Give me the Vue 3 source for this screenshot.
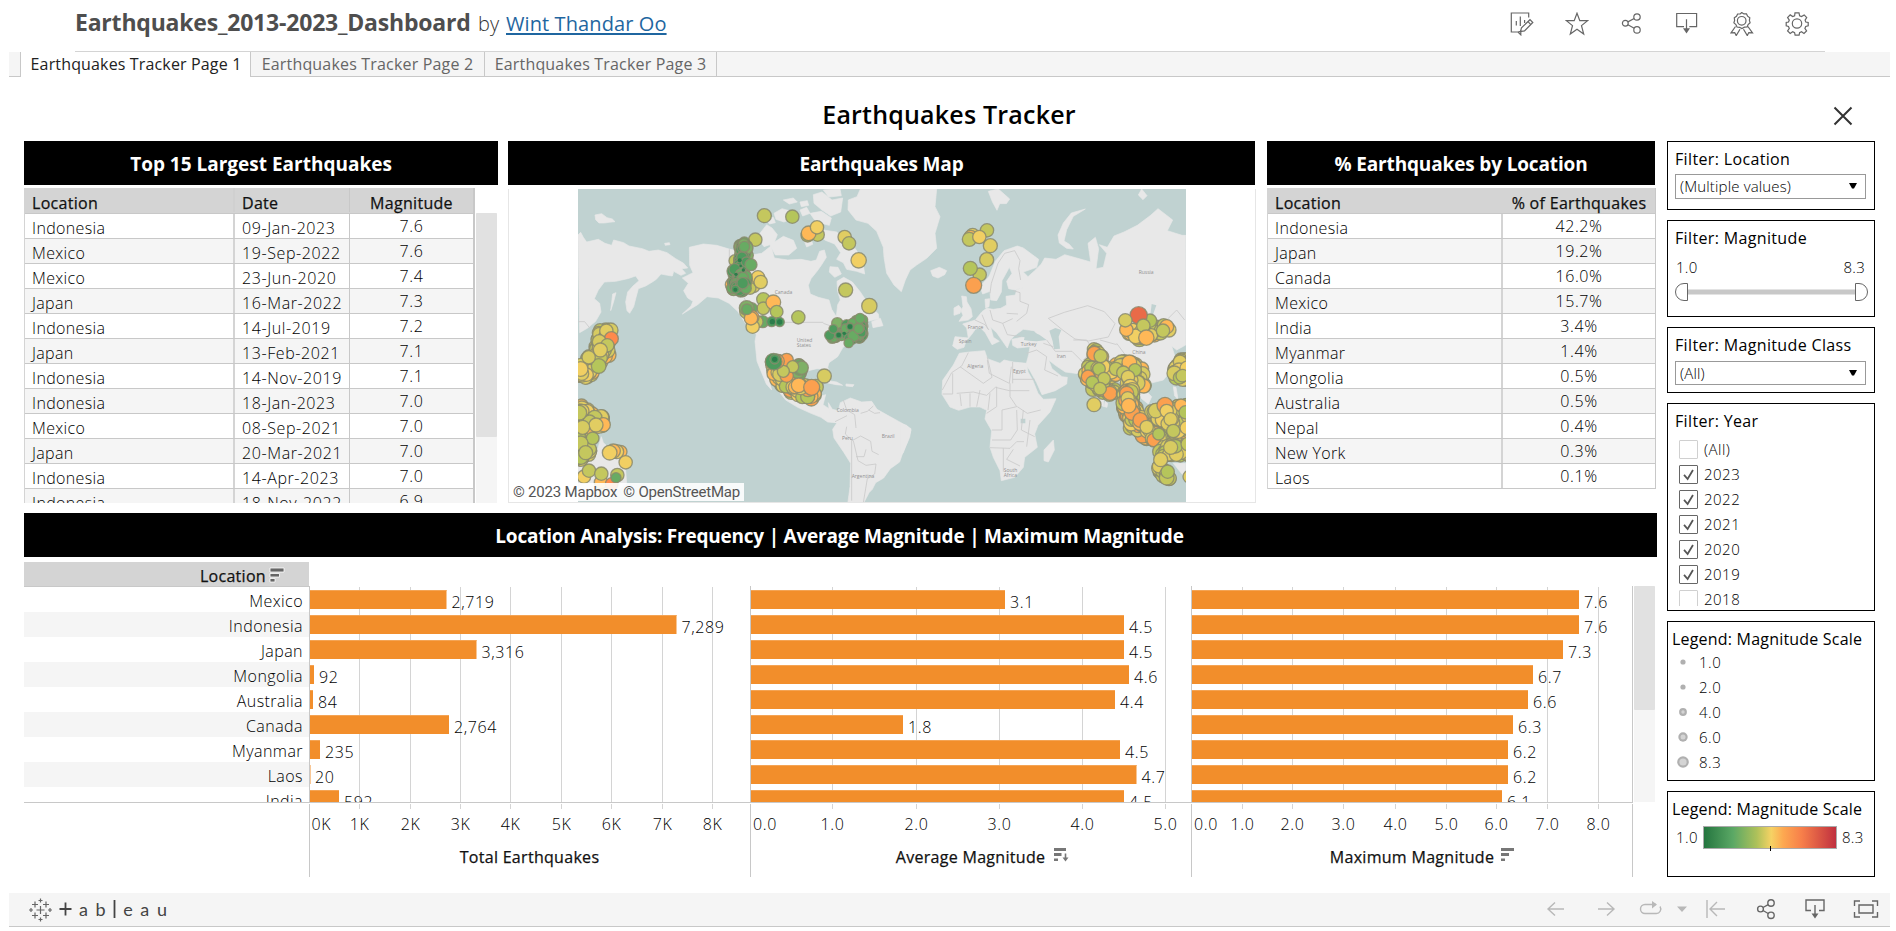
<script setup>
const quakes = [
  ['Indonesia', '09-Jan-2023', '7.6'], ['Mexico', '19-Sep-2022', '7.6'], ['Mexico', '23-Jun-2020', '7.4'],
  ['Japan', '16-Mar-2022', '7.3'], ['Indonesia', '14-Jul-2019', '7.2'], ['Japan', '13-Feb-2021', '7.1'],
  ['Indonesia', '14-Nov-2019', '7.1'], ['Indonesia', '18-Jan-2023', '7.0'], ['Mexico', '08-Sep-2021', '7.0'],
  ['Japan', '20-Mar-2021', '7.0'], ['Indonesia', '14-Apr-2023', '7.0'], ['Indonesia', '18-Nov-2022', '6.9'],
]
const shares = [
  ['Indonesia', '42.2%'], ['Japan', '19.2%'], ['Canada', '16.0%'], ['Mexico', '15.7%'], ['India', '3.4%'],
  ['Myanmar', '1.4%'], ['Mongolia', '0.5%'], ['Australia', '0.5%'], ['Nepal', '0.4%'], ['New York', '0.3%'], ['Laos', '0.1%'],
]
const places = ['Mexico', 'Indonesia', 'Japan', 'Mongolia', 'Australia', 'Canada', 'Myanmar', 'Laos', 'India']
const charts = [
  {
    title: 'Total Earthquakes', titleX: 220.5, zero: '0K', zeroX: 2.5, icon: '',
    ticks: [[50, '1K'], [101, '2K'], [151, '3K'], [201, '4K'], [252, '5K'], [302, '6K'], [353, '7K'], [403, '8K']],
    bars: [[137.5, '2,719'], [367.5, '7,289'], [167.5, '3,316'], [5, '92'], [4, '84'], [140, '2,764'], [11, '235'], [1, '20'], [30, '592']],
  },
  {
    title: 'Average Magnitude', titleX: 220.5, zero: '0.0', zeroX: 3, icon: 'down',
    ticks: [[82, '1.0'], [166, '2.0'], [249, '3.0'], [332, '4.0'], [415, '5.0']],
    bars: [[255, '3.1'], [374, '4.5'], [374, '4.5'], [379, '4.6'], [365, '4.4'], [153, '1.8'], [370, '4.5'], [386.5, '4.7'], [374, '4.5']],
  },
  {
    title: 'Maximum Magnitude', titleX: 221, zero: '0.0', zeroX: 3, icon: 'plain',
    ticks: [[51, '1.0'], [101, '2.0'], [152, '3.0'], [204, '4.0'], [255, '5.0'], [305, '6.0'], [356, '7.0'], [407, '8.0']],
    bars: [[388, '7.6'], [388, '7.6'], [372, '7.3'], [342, '6.7'], [337, '6.6'], [322, '6.3'], [317, '6.2'], [317, '6.2'], [311, '6.1']],
  },
]
const years = [['(All)', false], ['2023', true], ['2022', true], ['2021', true], ['2020', true], ['2019', true], ['2018', false]]
const sizes = [['1.0', 2.6], ['2.0', 2.6], ['4.0', 3.9], ['6.0', 4.7], ['8.3', 5.8]]

const C = { y: '#f1cf63', s: '#e1cd62', l: '#d7cb61', k: '#c4c75e', g: '#b5c55b', o: '#ffb857', O: '#fba04f', r: '#ff8a4c', R: '#e96a48', e: '#68ab63', E: '#4d9a5d', m: '#7fb066' }

// Small deterministic generator so the dense swarms render the same way each time.
let seed = 7
const rnd = () => { seed = (seed * 16807) % 2147483647; return seed / 2147483647 }
function swarm(points, n, spread, palette, r = 20) {
  const out = []
  for (let i = 0; i < n; i++) {
    const t = rnd() * (points.length - 1)
    const a = Math.floor(t)
    const f = t - a
    const [x1, y1] = points[a]
    const [x2, y2] = points[a + 1]
    out.push([
      Math.round(x1 + (x2 - x1) * f + (rnd() - 0.5) * spread),
      Math.round(y1 + (y2 - y1) * f + (rnd() - 0.5) * spread),
      Math.round(r + (rnd() - 0.5) * 4),
      palette[Math.floor(rnd() * palette.length)],
    ])
  }
  return out
}
const westDots = [
  ...swarm([[104, 460], [98, 510], [75, 540], [24, 585]], 120, 36, 'kslgyo', 21),
  ...swarm([[24, 685], [60, 705], [94, 726], [30, 745]], 50, 24, 'slyok', 21),
  ...swarm([[30, 765], [45, 800], [50, 820], [20, 830]], 24, 26, 'gkls'),
  [109, 452, 20, 's'], [124, 476, 21, 'r'], [88, 485, 21, 'l'], [112, 496, 20, 'k'], [91, 510, 21, 's'], [56, 532, 20, 'l'], [32, 567, 22, 'y'], [28, 698, 22, 'k'], [78, 735, 21, 's'], [38, 742, 21, 'l'], [68, 775, 19, 'g'], [32, 790, 22, 'k'], [47, 818, 21, 'k'],
  [152, 815, 19, 'o'], [140, 815, 21, 'y'], [130, 813, 21, 'o'], [119, 818, 22, 'y'], [167, 847, 20, 'y'], [42, 890, 20, 'y'], [57, 872, 20, 'k'], [93, 907, 20, 'o'], [94, 881, 20, 'k'], [142, 885, 20, 'k'], [125, 912, 19, 'r'], [138, 893, 15, 'e'],
  [583, 107, 21, 'k'], [667, 110, 20, 'g'], [713, 166, 20, 'k'], [743, 164, 20, 'k'], [716, 160, 22, 'o'], [741, 142, 20, 'y'], [824, 171, 20, 's'], [837, 190, 20, 'k'], [866, 241, 23, 'y'], [827, 330, 21, 'k'], [898, 378, 23, 'l'], [685, 412, 20, 'g'],
  [556, 179, 20, 'k'], [486, 314, 20, 'o'], [495, 242, 18, 'k'], [550, 318, 20, 's'], [564, 292, 20, 'y'], [540, 325, 18, 'k'], [572, 306, 20, 's'],
  ...swarm([[518, 195], [522, 230], [512, 260], [505, 290], [498, 325]], 80, 28, 'eEEEm', 17),
  ...swarm([[500, 275], [525, 305], [500, 330]], 34, 28, 'EEe', 17),
  [523, 200, 16, 'e'], [543, 254, 18, 'e'], [518, 310, 17, 'E'], [496, 328, 12, 'E'],
  [580, 358, 20, 'g'], [580, 385, 19, 'k'], [578, 425, 18, 'e'], [560, 425, 19, 'k'], [545, 385, 17, 'e'], [530, 395, 21, 'k'], [530, 384, 22, 'm'], [546, 412, 21, 'O'], [548, 440, 20, 'y'], [543, 415, 20, 'o'], [531, 388, 16, 'e'], [610, 367, 22, 'o'], [620, 395, 19, 'g'], [605, 425, 15, 'E'], [629, 426, 14, 'E'],
  [802, 430, 17, 'm'], ...swarm([[785, 470], [820, 455], [845, 440], [872, 425], [870, 465], [830, 470]], 80, 22, 'EEe', 15), [870, 415, 15, 'e'], [866, 446, 15, 'e'], [790, 447, 13, 'E'], [836, 489, 14, 'e'], [806, 466, 11, 'E'], [840, 440, 11, 'E'],
  ...swarm([[618, 550], [640, 590], [670, 625], [730, 640]], 110, 36, 'kOsoygl', 21), ...swarm([[690, 560], [690, 580]], 12, 18, 'em', 18),
  [650, 540, 20, 'O'], [650, 587, 20, 'O'], [668, 560, 18, 'k'], [640, 574, 18, 'k'], [686, 616, 22, 'o'], [725, 622, 24, 'O'], [763, 588, 21, 'l'], [622, 544, 21, 'O'], [611, 545, 25, 'E'], [614, 538, 14, 'E'],
]
const eastDots = [
  [218, 166, 21, 's'], [212, 172, 21, 'o'], [261, 151, 20, 'k'], [208, 178, 21, 'k'], [238, 171, 20, 'y'], [271, 197, 21, 's'], [260, 239, 21, 'l'], [239, 284, 20, 'k'], [211, 265, 21, 'g'], [221, 316, 24, 'O'],
  ...swarm([[680, 450], [720, 468], [765, 455], [800, 440]], 36, 20, 'soyk', 21), [750, 422, 20, 'g'], [716, 406, 26, 'R'], [676, 421, 20, 'l'], [730, 437, 20, 'k'], [800, 440, 21, 'o'], [789, 452, 20, 'k'], [739, 473, 23, 'o'],
  ...swarm([[600, 515], [580, 560], [565, 595], [600, 620], [630, 635]], 64, 36, 'kgosl', 20),
  ...swarm([[600, 580], [660, 570], [690, 560], [725, 600], [690, 600]], 84, 40, 'skoygl', 21),
  [583, 521, 22, 'O'], [602, 528, 20, 'k'], [597, 567, 19, 'g'], [564, 590, 20, 'O'], [612, 596, 19, 'k'], [577, 607, 19, 'g'], [630, 640, 21, 'O'], [600, 626, 19, 'k'], [582, 674, 21, 's'], [688, 547, 22, 'o'], [648, 567, 20, 'k'], [705, 570, 19, 'g'], [670, 578, 20, 'k'], [684, 591, 20, 's'],
  [690, 745, 20, 'k'], ...swarm([[684, 630], [682, 680], [710, 725], [750, 765], [800, 765], [857, 760]], 220, 30, 'kosOylg', 21),
  ...swarm([[765, 705], [800, 700], [857, 690], [857, 740], [790, 740]], 130, 38, 'kgosyl', 20),
  ...swarm([[785, 815], [820, 808], [857, 815]], 44, 30, 'kgsl', 20), ...swarm([[778, 862], [803, 892]], 16, 16, 'kls', 21),
  [680, 640, 21, 'O'], [683, 655, 20, 's'], [686, 677, 22, 'o'], [721, 720, 22, 'O'], [740, 741, 20, 's'], [795, 676, 24, 'O'], [800, 693, 20, 'y'], [812, 718, 20, 's'], [820, 753, 20, 'k'], [776, 762, 18, 'g'], [812, 802, 21, 'l'], [782, 839, 21, 's'], [800, 893, 22, 'k'], [803, 875, 20, 'g'],
  ...swarm([[857, 535], [835, 570], [830, 585], [857, 590]], 40, 18, 'skgyl', 21), [862, 565, 22, 'y'], [847, 587, 19, 'k'], [857, 697, 20, 'g'], [860, 743, 20, 'y'], [863, 792, 20, 'k'], [868, 890, 19, 's'],
]
</script>

<template>
  <div class="page">
    <header class="top">
      <h1>Earthquakes_2013-2023_Dashboard</h1>
      <span class="by">by</span>
      <a class="author">Wint Thandar Oo</a>
      <div class="actions">
        <svg viewBox="0 0 24 24"><path d="M8 20H1.3V1H18.7V5.5M6.3 9v4.5M10.3 4.5v9.5M14.6 8v3M8 20l2.8 2.8v-3.6z" /><path d="M10.5 19.5l1-3.8 8.5-8 2.8 2.8-8.3 8.4zM18 9.7l2.6 2.7" /></svg>
        <svg viewBox="0 0 24 24"><path d="M12 1.2L14.8 8.700H22.600L16.500 13.600 18.700 22 12 17.200 5.300 22 7.500 13.600 1.400 8.700H9.200z" /></svg>
        <svg viewBox="0 0 24 24"><circle cx="5.300" cy="11.300" r="2.900" /><circle cx="17" cy="5" r="3.200" /><circle cx="17" cy="17.900" r="3.200" /><path d="M7.900 9.900L14.200 6.500M7.900 12.800L14.200 16.300" /></svg>
        <svg viewBox="0 0 24 24"><path d="M9 14.700H1.700V1.500H21.600V14.700H14.300M11.500 7.300V17" /><path class="solid" d="M8 16.200h7L11.500 21.400z" /></svg>
        <svg viewBox="0 0 24 24"><circle cx="11.700" cy="8.800" r="4.300" /><path d="M11.700 .5l2.200 1.400 2.600 0 1.100 2.300 2.200 1.500-.4 2.600 .7 2.500-2 1.700-1 2.400-2.600 .3-2.600 1.300-2.300-1.200-2.600-.3-1.100-2.400-2-1.700.7-2.500-.3-2.600 2.200-1.500 1.100-2.300 2.600 0zM5.500 14.500L1 20.800l3.700-.2 1.500 3L10 17.200M17.900 14.500l4.600 6.300-3.700-.2-1.500 3-3.800-6.400" /></svg>
        <svg viewBox="0 0 24 24"><circle cx="12" cy="11.500" r="4.700" /><path d="M10 .8h4l.6 3 1.900.8 2.700-1.700 2.500 2.700-1.600 2.500.7 1.900 2.400.5v3.400l-2.500.6-.8 1.900 1.700 2.500-2.600 2.600-2.500-1.700-1.900.8-.5 2.500h-4l-.5-2.500-1.900-.8-2.500 1.700-2.600-2.600 1.700-2.500-.8-1.900-2.300-.6v-3.400l2.300-.5.8-1.900-1.700-2.500 2.600-2.700 2.500 1.700 1.900-.8z" /></svg>
      </div>
    </header>

    <nav class="tabs">
      <span class="tab stub"></span>
      <span class="tab active">Earthquakes Tracker Page 1</span>
      <span class="tab">Earthquakes Tracker Page 2</span>
      <span class="tab">Earthquakes Tracker Page 3</span>
    </nav>

    <div class="heading">
      <h2>Earthquakes Tracker</h2>
      <svg class="close" viewBox="0 0 20 20"><path d="M1.500 1.500L18.500 18.500M18.500 1.500L1.500 18.500" /></svg>
    </div>

    <main class="board">
      <section class="content">
        <div class="upper">
          <div class="panel top15">
            <h3>Top 15 Largest Earthquakes</h3>
            <div class="scroller">
              <div class="table three">
                <div class="tr th"><span>Location</span><span>Date</span><span class="mid">Magnitude</span></div>
                <div v-for="(q, i) in quakes" :key="i" class="tr" :class="{ band: i % 2 }">
                  <span>{{ q[0] }}</span><span class="num">{{ q[1] }}</span><span class="mid num">{{ q[2] }}</span>
                </div>
              </div>
              <div class="rail"><i></i></div>
            </div>
          </div>

          <div class="panel map">
            <h3>Earthquakes Map</h3>
            <div class="mapbox">
              <svg class="world" viewBox="0 0 1824 939" width="608" height="313">
                <rect width="1824" height="939" fill="#c0d2d1" />
                <g transform="translate(-24 -27)">
                  <g class="land">
                    <path d="M24 165l8-8 8 15 10 14 35-8 20 12 20 6 6-16 30 8 16 10 40 8 20 8 28-4 26 8 26 18 24 14 12 14-18 2 12 14-14 6-22-12-4 14-14-2-20-4-14 16-12 8-20 12-22 8-8 30-6 24-12 20-8-8-4-26 6-30 16-18 18-16-10-14-24 8-36 8-34 2-18 24-12 26 16 14 4 26-16 28-24 20-24 14z" />
                    <path d="M75 105l20-4 16 12 16 4 8 8-18 2-14 2-16 0-10-10zM284 190l14-2 2 6-14 2zM128 342l10-4-8 30-8 24z" />
                    <path d="M358 202l42-10 40 4 40 12 40 7 25 10 30-5 28-22 10 36 40 6 40-2 30 6 16-4 10-26 14-4 6 22-14 22-14 20-18 22-8 20 6 26 24 10 32 8 8 28 14 22 4-36 8-14-8-26-2-30 20-12 26 14 24 30 12 18 26 32 16 16 2 14-34 8-34 18 32-14 4 18-24 18-32 26-20 12-16 28-26 18-4 14 10 24-2 20-10-12-6-26-24-2-26 6-12 12-8 24-2 28 14 28 26 6 12-20 22-6-8 30 18 12 4 20 20 12-4 10-24-2-20-14-30-12-40-18-36-22-24-30-30-46 12 46-16-18-14-34-14-34-6-60 4-20-30-30-26-40-26-24-32-16-34-4-28 24-46 28 26-24 6-14-16-10-12-22 14-22-18-16 32-16-10-22z" />
                    <path d="M570 160l20-26 16 10 16 20-10 26-30 10-14-20zM600 195l40-26 30 12 10 24-24 20-40 0zM612 100l24-14 28 8 6 20-28 12-24-8zM690 90l20-8 10 18-22 8zM720 100l34-6 30 20-6 22-40-10zM760 150l40 6 30 26 26 24 22 36 6 40-24-8-30-6-10-20-20-10 12-20-18-26-30-12-14-16zM780 260l24 2 10 20-20 10-16-16zM700 175l22-4 6 22-18 8zM730 44l26-8 30 24 32-6-6 42-30 12-26-18-24-20zM760 30l50-3 4 20-38 4zM640 60l30-6 12 12-24 6zM690 66l22-4 4 14-22 4zM905 425l26-10 8 22-30 6zM590 118l20-6 6 16-18 4z" />
                    <path d="M835 60l26-10 10-23h229l-5 53 15 30-15 50 5 45-30 30-30 20-20 15-14 30-12 35-22-20-22-35-8-48-2-30-20-48-26-24-36-10-24-30z" />
                    <path d="M760 600l40 6 18 10-20-2-38-8zM828 612l24 2-4 6-20-2zM775 668l12 20 18 4 6-24 30-14 34 12 30-2 16 24 32 18 40 22 30 18-4 26-20 44-10 30-28 20-20 28-24 14-10 20-10 10-6 12-16 30H832l8-60 2-70-20-32-30-44-4-26 12-18-20-16z" />
                    <path d="M94 770l6 18 22 20 28 12 16 40 4 50-50 40-96 0V860l30-12 26-30z" />
                  </g>
                  <path class="lines" d="M24 425l20 0 16 20M478 208V300l30 30 24 40M575 427H760M600 570l40 6 20-8 20 22 12 14M760 430l40 14 34 18M820 660l10 30 24 14 4 40M795 725l36-18M830 740l-4 22 20 20 26-14 30 16 4 30 20 10M872 700l20-6 18-16M845 782v180M850 782l14 60 24 14 30-4-4 30-22 14-14 84M896 690l18 10 16-2M858 830l24 0 6-22" />
                  <g class="lbl"><text x="614" y="341">Canada</text><text x="680" y="485">United</text><text x="680" y="500">States</text><text x="800" y="695">Colombia</text><text x="816" y="779">Peru</text><text x="935" y="773">Brazil</text><text x="845" y="893">Argentina</text></g>
                  <circle v-for="(d, i) in westDots" :key="i" :cx="d[0]" :cy="d[1]" :r="d[2]" :fill="C[d[3]]" class="dot" />
                  <g class="pin"><circle cx="509" cy="241" r="6" /><circle cx="512" cy="258" r="4" /><circle cx="520" cy="270" r="5" /><circle cx="498" cy="283" r="5" /><circle cx="496" cy="329" r="6" /><circle cx="614" cy="538" r="8" /><circle cx="607" cy="425" r="8" /><circle cx="629" cy="426" r="8" /><circle cx="806" cy="465" r="7" /><circle cx="840" cy="440" r="7" /><circle cx="823" cy="460" r="5" /></g>
                </g>
                <g transform="translate(966 -27)">
                  <g class="land">
                    <path d="M165 470l40 4-5-30-12-12 38-12 20-25 14-10 20 3 22-3 18-10-2-26 28-4 4-15 22-8-26 8-20-4-6-22 16-24-8-18-22 40-2 34-14 26-18-2-2-26-22 8-8-22 28-32 18-44 26-32 40-14 18 6 46 34-6 24-40 14 14 14 20-18 20-20 10-18 34 4 26-14 36 10 42 12-8-56 22-18 10 34-8 60 22-4 10-42-22-26 24 8 20-34 30-12 40-20 40-30 22-20 44 34-16 32 44 14H857V495l-27 15-15-12 10 32-10 40-25 30-40 10-15 20 20 20-10 22-20-16-10-14-14 18 16 42-22-24-10-28-10-40-24-10-26 26-14 24 0 30-14-8-16-50-20-32-20-8-45-6-30-20-20-16 10 26 30 24 16 2-2 20-34 20-40 12-16-36-20-36-12-18 8-30 4-24-38 4-14-8-2-18 28-6 28 2 30-2-20-20-32-4-28 20-12 14-8 22-14-20-18-26-18-16 8 30 18 12-22 10-20-36-16-16-14 6-10 14-18 22-6 18-20 6-14-10z" />
                    <path d="M178 520l30-4 46-4 8 24 38 14 12-10 28 6 40 4 4 26 14 24 16 40 16 18 38-2-18 40-36 40-10 26 8 40-38 30-4 30-26 30-40 10-4-30-20-40-10-30 5-50-20-35 5-26-20-10-30 0-34 10-26-10-24-38 2-42 32-46z" />
                    <path d="M460 780l3 30-18 36-13-4 0-32zM185 348l14 2 2 16 12 20 4 24-12 10-28 4 12-18-6-14 6-12zM162 384l14-8 8 10-4 14-18 6zM92 272l26-10 22 10-6 12-20 10-16-6zM556 87l-36 22-20 40-8 34 16 10 12 14-20-2-22-16-4-24 16-36 24-30zM265 34l30-7 34 30-10 14-20 0-8 20-14-26zM725 27l16 20-12 12-14-14zM255 358l14-2-2 24-10 4zM755 390l10-18 2 8-12 22zM820 620l8 2 6 36-10-10zM820 850l37 0v44l-16-18zM615 664l8 6-2 12-8-2zM0 730l20 6 13 14-10 34-14 36-9 8z" />
                  </g>
                  <path class="sea" d="M372 480l4-20 12-8 30 12 22 16-30 4-24-2zM448 452l18-8 18 6-8 20 4 36-18 2-4-24zM362 716h14v14h-14zM755 372l14 4-12 34-6-4z" />
                  <path class="lines" d="M270 340l4-30 20-60 20-30 30-8 16 30-4 24 6 34M340 332l20 6 0 26 26 10-6 26-30 24M225 420l30 14 12 16M270 390l8 30 30 10 30-14M308 430l14 34 40 6M246 404l18 44M320 400l34 2M445 415l48-18 70-20 50 18 32 36-20 40-60 12-40-6-36-26zM430 490l30 10M440 480l26 34 50 0 50 50M380 520l30-10 30 20-6 40 40 18M520 480l40 0 20 30-30 30M600 480l50 14M650 490l30 40 60 40M790 430l40-40 24 30M205 518l-20 40-30 20-28 52M180 560l70 50 26-18-14-60M262 540l6 40 60 30 6-50M338 546v64M338 598h66M158 580v62l-30 0M170 640l50-4 40 10 26-24 42 10 60 0M180 642l4 36M210 640l0 40M240 630l-10 50M270 640l-6 50M290 620l0 60-30 20M330 610l0 40 20 30-44 10 0 60-30 0M350 690l2 60-20 30-56 0M352 680l30 20 40-10M370 690l-6 60 40 20M270 803l60 2 20-20 22 0M310 805l0 70M340 808l-20 30 40 20M390 720l-10 80" />
                  <g class="lbl"><text x="716" y="281">Russia</text><text x="203" y="446">France</text><text x="176" y="489">Spain</text><text x="362" y="499">Turkey</text><text x="470" y="535">Iran</text><text x="697" y="523">China</text><text x="202" y="563">Algeria</text><text x="339" y="578">Egypt</text><text x="311" y="876">South</text><text x="311" y="891">Africa</text></g>
                  <circle v-for="(d, i) in eastDots" :key="i" :cx="d[0]" :cy="d[1]" :r="d[2]" :fill="C[d[3]]" class="dot" />
                </g>
              </svg>
              <span class="credit"><span>© 2023 Mapbox</span><span>© OpenStreetMap</span></span>
            </div>
          </div>

          <div class="panel pct">
            <h3>% Earthquakes by Location</h3>
            <div class="table two">
              <div class="tr th"><span>Location</span><span class="mid">% of Earthquakes</span></div>
              <div v-for="(s, i) in shares" :key="i" class="tr" :class="{ band: i % 2 }">
                <span>{{ s[0] }}</span><span class="mid num">{{ s[1] }}</span>
              </div>
            </div>
          </div>
        </div>

        <div class="panel lower">
          <h3>Location Analysis: Frequency | Average Magnitude | Maximum Magnitude</h3>
          <div class="analysis">
            <div class="names">
              <div class="nameHead">Location<svg viewBox="0 0 16 16"><path d="M1 1h14v4H1zM1 6.500h9.500v3.500H1zM1 11.500h5v3.500H1z" /></svg></div>
              <div class="nameList"><div v-for="(p, i) in places" :key="p" :class="{ band: i % 2 }">{{ p }}</div></div>
            </div>
            <svg v-for="(c, ci) in charts" :key="c.title" class="chart" width="441" height="291">
              <svg width="441" height="216">
                <line v-for="t in c.ticks" :key="t[0]" :x1="t[0] + .5" :x2="t[0] + .5" y1="1" y2="216" class="grid" />
                <template v-for="(b, i) in c.bars" :key="i">
                  <rect x="1" :y="4 + 25 * i" :width="Math.max(b[0] - 1, .5)" height="19" fill="#f28e2b" />
                  <path :d="`M1 ${4.5 + 25 * i}H${b[0]}`" stroke="#f4a455" />
                  <text :x="b[0] + 5" :y="21.500 + 25 * i">{{ b[1] }}</text>
                </template>
              </svg>
              <line v-for="t in c.ticks" :key="t[0]" :x1="t[0] + .5" :x2="t[0] + .5" y1="218" y2="223" class="grid" />
              <path d="M0 216.500H441" class="axis" />
              <path d="M.5 0V216M.5 218V291" class="axis" />
              <text :x="c.zeroX" y="244">{{ c.zero }}</text>
              <text v-for="t in c.ticks" :key="t[0]" :x="t[0] + .5" y="244" text-anchor="middle">{{ t[1] }}</text>
              <text :x="c.titleX" y="277" text-anchor="middle" class="axisTitle">{{ c.title }}</text>
              <path v-if="c.icon === 'down'" fill="#777" d="M304 262h12v3h-12zM304 267h7.500v3H304zM304 272.500h4v2.500h-4zM314.700 267.500h1.600v4h2.200l-3 4-3-4h2.200z" />
              <path v-if="c.icon === 'plain'" fill="#777" d="M310 262h13v3h-13zM310 267h8v3h-8zM310 272.500h4v2.500h-4z" />
            </svg>
            <div class="endline"></div>
            <div class="rail end"><i></i></div>
          </div>
        </div>
      </section>

      <aside class="side">
        <div class="card f1"><h4>Filter: Location</h4><div class="select">(Multiple values)<svg viewBox="0 0 8 6"><path d="M0 0H8L5 5.500H3z" /></svg></div></div>
        <div class="card f2">
          <h4>Filter: Magnitude</h4>
          <div class="range"><span>1.0</span><span>8.3</span></div>
          <svg class="slider" width="193" height="18"><path d="M13 9H181" stroke="#c8c8c8" stroke-width="5" /><path d="M12.500 .5V17.500H9A8.500 8.500 0 0 1 9 .5zM180.500 .5V17.500H184A8.500 8.500 0 0 0 184 .5z" fill="#fff" stroke="#666" /></svg>
        </div>
        <div class="card f3"><h4>Filter: Magnitude Class</h4><div class="select">(All)<svg viewBox="0 0 8 6"><path d="M0 0H8L5 5.500H3z" /></svg></div></div>
        <div class="card f4">
          <h4>Filter: Year</h4>
          <div class="years">
            <div v-for="y in years" :key="y[0]" class="year">
              <i :class="{ on: y[1] }"><svg v-if="y[1]" viewBox="0 0 19 19"><path d="M4.500 10l4 4.500L14.500 4.500" /></svg></i><span>{{ y[0] }}</span>
            </div>
          </div>
        </div>
        <div class="card f5">
          <h4>Legend: Magnitude Scale</h4>
          <div v-for="s in sizes" :key="s[0]" class="size">
            <svg width="14" height="14"><circle cx="7" cy="7" :r="s[1]" fill="#b0b0b0" /><circle v-if="s[1] > 3" cx="7" cy="7" :r="s[1] - 2.2" fill="#d4d4d4" /></svg><span>{{ s[0] }}</span>
          </div>
        </div>
        <div class="card f6">
          <h4>Legend: Magnitude Scale</h4>
          <div class="ramp"><span>1.0</span><div class="gradient"></div><span>8.3</span></div>
        </div>
      </aside>
    </main>

    <footer class="foot">
      <svg class="mark" width="24" height="24" viewBox="0 0 24 24"><path d="M11.500 8v8M7.500 12h8M6 3.500v6M3 6.500h6M17 3.500v6M14 6.500h6M6 14.500v6M3 17.500h6M17 14.500v6M14 17.500h6M11.500 .5v4M9.500 2.500h4M11.500 19.500v4M9.500 21.500h4M2 10v4M0 12h4M21 10v4M19 12h4" /></svg>
      <span class="word"><svg width="13" height="16" viewBox="0 0 13 16"><path d="M6.500 1.500V14.500M.5 8H12.500" /></svg><span>ab</span><svg class="bar" width="4" height="18" viewBox="0 0 4 18"><path d="M1.500 0V18" /></svg><span>eau</span></span>
      <div class="tools">
        <svg class="dim" width="346" height="24" viewBox="0 0 346 24">
          <path d="M18 12H2M9 5.500L2 12l7 6.500M52 12h16M61 5.500L68 12l-7 6.500" />
          <path d="M110 7.500H99a4.500 4.500 0 0 0 0 9H110a4.500 4.500 0 0 0 4-7" /><path class="fill" d="M106 4l5 3.500-5 4zM131 9.500h10l-5 5.500z" />
          <path d="M161 3V21M179 12H164M171 5l-7 7 7 7" />
          <g class="dark">
            <circle cx="214.500" cy="12" r="2.900" /><circle cx="225" cy="6" r="3.200" /><circle cx="225" cy="18.300" r="3.200" /><path d="M217 10.500L222.200 7.700M217 13.500L222.200 16.500" />
            <path d="M265 13.500H260V3H278V13.500H273M269 8V18" /><path class="fill" d="M265.500 16.500h7L269 21.500z" />
            <path d="M313 8h14v8h-14zM308.500 9V4H314M326 4h5.500V9M308.500 15v5H314M326 20h5.500V15" />
          </g>
        </svg>
      </div>
    </footer>
  </div>
</template>

<style>
html, body { background: #fff; overflow: hidden; }
</style>

<style scoped>
* { box-sizing: border-box; }
h1, h2, h3, h4 { margin: 0; font-weight: 600; }
.page { width: 1896px; height: 931px; display: flex; flex-direction: column; font-family: "Open Sans", "Noto Sans", sans-serif; font-size: 16px; color: #333; background: #fff; overflow: hidden; font-weight: 400; }
.top { flex: none; height: 52px; margin: 0 71px 0 75px; border-bottom: 1px solid #d4d4d4; display: flex; align-items: baseline; white-space: nowrap; line-height: 44px; }
h1 { width: 403px; font-size: 23px; letter-spacing: -0.2px; font-weight: 700; color: #4e4e4e; }
.by { width: 28px; font-size: 20px; color: #333; font-weight: 300; }
.author { font-size: 20px; letter-spacing: .1px; color: #1f66a0; text-decoration: underline; text-underline-offset: 2px; text-decoration-thickness: 2px; }
.actions { align-self: flex-start; margin-left: auto; margin-right: 16px; padding-top: 12px; display: flex; gap: 31px; }
.actions svg, .tools svg, .mark, .close { display: block; }
.actions svg { width: 24px; height: 24px; fill: none; stroke: #666; stroke-width: 1.200; }
.actions .solid { fill: #666; stroke: none; }
.tabs { flex: none; height: 25px; margin: 0 6px 0 9px; display: flex; background: #f5f5f5; position: relative; box-shadow: inset 0 -1px #c8c8c8; }
.tab { height: 25px; border-right: 1px solid #c8c8c8; width: 234px; text-align: center; line-height: 24px; font-size: 16px; letter-spacing: .18px; color: #666; white-space: nowrap; }
.tab + .tab + .tab + .tab { width: 232px; }
.tab.active { background: #fff; color: #222; width: 230px; letter-spacing: .15px; padding-left: 1px; }
.tab.stub { width: 12px; }
.heading { flex: none; height: 64px; display: flex; align-items: center; position: relative; }
h2 { width: 1898px; flex: none; text-align: center; font-size: 25px; color: #000; padding-top: 10px; line-height: 34px; letter-spacing: .2px; }
.close { position: absolute; left: 1833px; top: 29px; width: 20px; height: 20px; stroke: #333; stroke-width: 2; fill: none; }
.board { flex: none; height: 736px; display: flex; gap: 10px; padding-left: 24px; }
.content { width: 1633px; display: flex; flex-direction: column; gap: 10px; }
.upper { height: 362px; display: flex; }
h3 { height: 44px; background: #000; color: #fff; font-size: 19px; font-weight: 700; letter-spacing: -.15px; line-height: 46px; text-align: center; white-space: nowrap; }
.top15 { width: 474px; margin-right: 10px; }
.top15 h3 { letter-spacing: 0; }
.map { width: 748px; margin-right: 11px; }
.map h3 { width: 747px; }
.pct { width: 389px; }
.pct h3 { width: 388px; }
.scroller { margin-top: 3px; height: 315px; overflow: hidden; display: flex; }
.table { border-left: 1px solid #d4d4d4; border-right: 1px solid #c8c8c8; color: #000; font-weight: 300; letter-spacing: .35px; }
.three { width: 451px; border-right-width: 2px; }
.two { width: 389px; margin-top: 3px; }
.tr { height: 25px; display: grid; border-bottom: 1px solid #c8c8c8; line-height: 28px; }
.three .tr { grid-template-columns: 210px 115px 1fr; }
.two .tr { grid-template-columns: 235px 1fr; }
.tr > span { height: 24px; padding-left: 7px; border-right: 1px solid #c8c8c8; white-space: nowrap; }
.tr > span:first-child { border-right-width: 2px; border-color: #d4d4d4; }
.tr > span:last-child { border-right: 0; }
.tr > .mid { padding-left: 0; text-align: center; line-height: 24px; }
.tr.th { height: 26px; background: #d4d4d4; color: #111; line-height: 31px; letter-spacing: .3px; font-weight: 400; -webkit-text-stroke: .25px #111; }
.tr.th > .mid { line-height: 31px; }
.three .tr.th > span:first-child { border-color: #d0d0d0; }
.two .tr.th > .mid { letter-spacing: .3px; }
.num { letter-spacing: .6px; }
.band { background: #f5f5f5; }
.rail { width: 21px; background: #f5f5f5; margin-left: 1px; margin-top: 25px; }
.rail i { display: block; height: 224px; background: #e1e1e1; border-radius: 1px; }
.mapbox { margin-top: 4px; height: 314px; border: 1px solid #e6e6e6; border-top: 0; position: relative; padding-left: 69px; }
.world { display: block; }
.land path { fill: #e8e8e8; stroke: #e8e8e8; stroke-width: 2; stroke-linejoin: round; }
.sea { fill: #c0d2d1; }
.lines { fill: none; stroke: #cacaca; stroke-width: 2.500; stroke-linejoin: round; }
.lbl text { font-size: 15px; fill: #909090; }
.dot { stroke: #89896d; stroke-width: 4; stroke-opacity: .85; }
.pin { fill: #2c7c4b; }
.credit { position: absolute; left: 0; bottom: 1px; width: 235px; height: 18px; padding-left: 4px; background: rgba(255,255,255,.88); font: 15px/19px Roboto, sans-serif; letter-spacing: -.2px; color: #555; display: flex; gap: 6px; white-space: nowrap; }
.lower h3 { padding-right: 2px; letter-spacing: -.22px; }
.analysis { display: flex; margin-top: 5px; height: 315px; }
.names { width: 285px; }
.nameHead { height: 25px; background: #d4d4d4; border-bottom: 1px solid #c8c8c8; display: flex; justify-content: flex-end; line-height: 28px; color: #111; padding-right: 24px; gap: 3px; -webkit-text-stroke: .25px #111; letter-spacing: .3px; }
.nameHead svg { width: 16px; height: 16px; margin: 5px 0 0 0; margin-right: 0; fill: #666; stroke: #fff; stroke-width: .8; }
.nameList { height: 216px; overflow: hidden; border-bottom: 1px solid #c8c8c8; text-align: right; font-weight: 300; color: #000; }
.nameList div { height: 25px; line-height: 29px; padding-right: 6px; letter-spacing: .45px; }
.chart { flex: none; margin-top: 24px; display: block; font-size: 16px; font-weight: 300; fill: #000; letter-spacing: .6px; }
.grid { stroke: #d4d4d4; }
.axis { stroke: #c8c8c8; fill: none; }
.axisTitle { fill: #111; font-weight: 400; stroke: #111; stroke-width: .25px; letter-spacing: .3px; }
.endline { flex: none; width: 1px; margin-top: 24px; background: linear-gradient(#c8c8c8 217px, #fff 217px 218px, #c8c8c8 218px); }
.rail.end { flex: none; width: 21px; height: 216px; margin: 24px 0 0 1px; }
.rail.end i { height: 124px; }
.side { width: 208px; display: flex; flex-direction: column; gap: 10px; }
.card { border: 1px solid #000; padding: 0 8px 0 7px; overflow: hidden; }
h4 { font-size: 16px; font-weight: 400; color: #000; letter-spacing: .35px; height: 33px; line-height: 35px; white-space: nowrap; }
.f1 { height: 69px; } .f2 { height: 97px; } .f3 { height: 66px; } .f4 { height: 208px; } .f5 { height: 160px; } .f6 { height: 86px; }
.f5, .f6 { padding-left: 4px; }
.f5 h4, .f6 h4 { letter-spacing: .2px; }
.select { width: 191px; height: 25px; border: 1px solid #999; font-size: 15px; line-height: 20px; padding: 0 8px 1px 4px; color: #000; display: flex; align-items: center; justify-content: space-between; letter-spacing: .15px; font-weight: 300; }
.f1 h4 { height: 32px; }
.f3 h4 { height: 33px; }
.f3 .select { height: 24px; }
.select svg { width: 8px; height: 6px; fill: #000; }
.range { display: flex; justify-content: space-between; height: 29px; line-height: 26px; font-size: 15px; font-weight: 300; letter-spacing: .3px; color: #000; padding-left: 1px; padding-right: 1px; }
.slider { display: block; }
.years { height: 169px; overflow: hidden; padding: 3px 0 0 4px; margin-top: 0; }
.year { height: 25px; display: flex; align-items: flex-start; gap: 6px; font-size: 15px; font-weight: 300; line-height: 19px; letter-spacing: .5px; color: #000; }
.year i { width: 19px; height: 19px; border: 1px solid #d0d0d0; border-radius: 1px; flex: none; }
.year i.on { border-color: #666; }
.year svg { display: block; width: 17px; height: 17px; fill: none; stroke: #555; stroke-width: 2; }
.size { height: 25px; display: flex; align-items: center; gap: 9px; padding: 0 0 3px 4px; font-size: 15px; font-weight: 300; letter-spacing: .5px; color: #000; }
.f5 h4 { height: 29px; line-height: 34px; }
.ramp { display: flex; padding-left: 4px; gap: 5px; font-size: 15px; font-weight: 300; color: #000; line-height: 23px; margin-top: 1px; letter-spacing: .4px; }
.gradient { width: 134px; height: 23px; border: 1px solid #aaa; position: relative; background: linear-gradient(90deg, #24753f 0%, #5ba865 22%, #aec15a 40%, #f6d264 51%, #fda850 60%, #f77f4a 74%, #c0303f 100%); }
.gradient::after { content: ""; position: absolute; left: 66px; bottom: -3px; width: 1px; height: 5px; background: #000; }
.foot { flex: none; height: 34px; margin: 16px 6px 0 9px; background: #f5f5f5; border-bottom: 1px solid #c8c8c8; display: flex; align-items: center; }
.mark { margin-left: 20px; stroke: #666; stroke-width: 1.200; fill: none; }
.word { display: flex; align-items: center; margin-left: 6px; font-family: Lato, sans-serif; font-size: 18px; letter-spacing: 7.600px; color: #444; line-height: 22px; padding-bottom: 2px; gap: 7px; }
.word svg { stroke: #444; stroke-width: 1.800; fill: none; }
.word .bar { margin-left: -7px; margin-right: -1px; }
.tools { margin-left: auto; margin-right: -2px; padding-bottom: 1px; }
.tools svg { fill: none; stroke-width: 1.400; }
.dim { stroke: #b8b8b8; }
.dim .fill { fill: #b8b8b8; stroke: none; }
.dark { stroke: #666; }
.dark .fill { fill: #666; }
</style>
